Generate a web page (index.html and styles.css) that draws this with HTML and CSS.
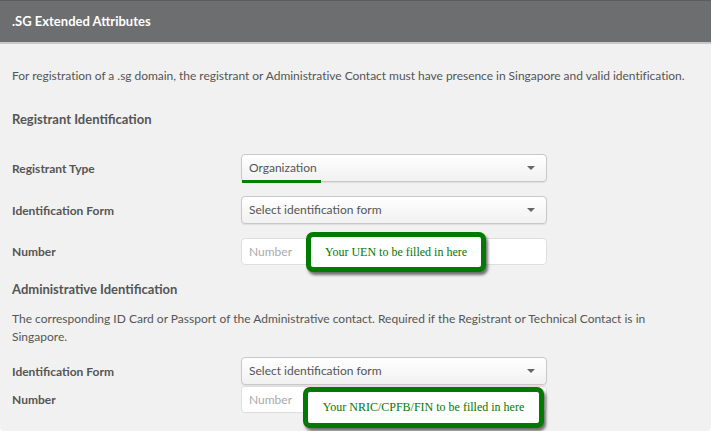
FILE: index.html
```html
<!DOCTYPE html>
<html>
<head>
<meta charset="utf-8">
<link rel="stylesheet" href="styles.css">
</head>
<body>
<div class="panel">
  <div class="panel-head">.SG Extended Attributes</div>
  <div class="panel-body">
    <p class="intro">For registration of a .sg domain, the registrant or Administrative Contact must have presence in Singapore and valid identification.</p>
    <h3 class="section h-first">Registrant Identification</h3>
    <div class="form-grid">
      <div class="label">Registrant Type</div>
      <div class="select"><span>Organization</span><i class="caret"></i><b class="underline"></b></div>
      <div class="label">Identification Form</div>
      <div class="select"><span>Select identification form</span><i class="caret"></i></div>
      <div class="label">Number</div>
      <div class="input"><span>Number</span></div>
    </div>
    <h3 class="section h-second">Administrative Identification</h3>
    <p class="para">The corresponding ID Card or Passport of the Administrative contact. Required if the Registrant or Technical Contact is in Singapore.</p>
    <div class="form-grid tight">
      <div class="label">Identification Form</div>
      <div class="select"><span>Select identification form</span><i class="caret"></i></div>
      <div class="label">Number</div>
      <div class="input"><span>Number</span></div>
    </div>
  </div>
  <div class="callout callout-uen">Your UEN to be filled in here</div>
  <div class="callout callout-nric">Your NRIC/CPFB/FIN to be filled in here</div>
</div>
</body>
</html>
```
FILE: styles.css
```css
html, body {
  margin: 0;
  padding: 0;
  background: #ffffff;
}
body {
  font-family: Lato, "Open Sans", sans-serif;
  color: #555;
}
.panel {
  position: relative;
  width: 711px;
  height: 431px;
  background: #f1f1f1;
  border-radius: 0 0 4px 4px;
  overflow: hidden;
}
.panel-head {
  height: 41px;
  background: #6d6e70;
  border-top: 1px solid #5c5c5e;
  border-bottom: 2px solid #c9c9c9;
  color: #fff;
  font-weight: bold;
  font-size: 13px;
  line-height: 41px;
  padding-left: 12px;
  box-sizing: content-box;
}
.panel-body {
  padding: 23px 12px 0 12px;
}
.intro {
  margin: 0;
  font-size: 12px;
  line-height: 18px;
  letter-spacing: -0.03px;
}
.section {
  margin: 0;
  font-size: 13px;
  line-height: 18px;
  font-weight: bold;
  color: #555;
}
.h-first { margin-top: 25px; }
.h-second { margin-top: 15px; }
.para {
  margin: 12px 0 0 0;
  font-size: 12px;
  line-height: 18px;
  width: 680px;
}
.form-grid {
  display: grid;
  grid-template-columns: 229px 306px;
  row-gap: 14px;
  margin-top: 26px;
  align-items: center;
}
.form-grid.tight {
  margin-top: 11px;
  row-gap: 1px;
}
.label {
  font-size: 12px;
  font-weight: bold;
  color: #555;
}
.select, .input {
  position: relative;
  height: 28px;
  box-sizing: border-box;
  border: 1px solid #c8c8c8;
  border-radius: 4px;
  font-size: 12px;
  line-height: 26px;
  padding-left: 7px;
}
.select {
  background: linear-gradient(#ffffff, #f1f1f1);
  color: #555;
  box-shadow: 0 1px 1px rgba(0,0,0,0.08);
}
.input {
  background: #fff;
  color: #aaa;
  border-color: #dedede;
  height: 27px;
  line-height: 25px;
}
.caret {
  position: absolute;
  right: 11px;
  top: 11px;
  width: 0;
  height: 0;
  border-left: 4px solid transparent;
  border-right: 4px solid transparent;
  border-top: 4px solid #666;
}
.underline {
  position: absolute;
  left: 0;
  bottom: -2px;
  width: 79px;
  height: 3px;
  background: #008000;
}
.callout {
  position: absolute;
  box-sizing: border-box;
  background: #fff;
  border: 5px solid #007a00;
  border-radius: 7px;
  box-shadow: 2px 3px 3px rgba(0,0,0,0.55);
  font-family: "Liberation Serif", "Times New Roman", serif;
  font-size: 12px;
  color: #007a00;
  display: flex;
  align-items: center;
  justify-content: center;
}
.callout-uen {
  left: 306px;
  top: 232px;
  width: 180px;
  height: 40px;
}
.callout-nric {
  left: 303px;
  top: 387px;
  width: 241px;
  height: 41px;
}
```
